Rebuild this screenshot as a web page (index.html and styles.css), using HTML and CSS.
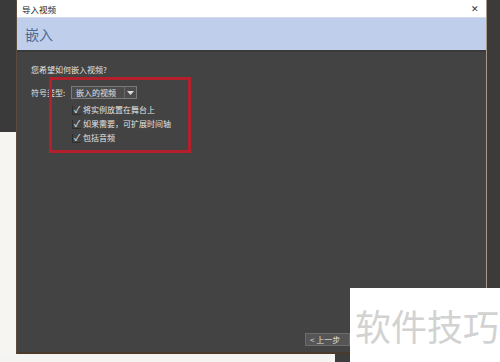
FILE: index.html
```html
<!DOCTYPE html>
<html>
<head>
  <title>导入视频</title>
  <link rel="stylesheet" href="styles.css">
</head>
<body>

<div class="screen">
  <div class="side-left">
    <div class="side-dark"></div>
    <div class="side-light"></div>
  </div>

  <div class="dialog">
    <div class="titlebar">
      <span class="title">导入视频</span>
      <span class="close">&#x2715;</span>
    </div>
    <div class="header">嵌入</div>

    <div class="content">
      <p class="question">您希望如何嵌入视频?</p>
      <div class="row">
        <span class="label">符号类型:</span>
        <div class="select">
          <span class="select-text">嵌入的视频</span>
          <span class="select-arrow">
            <svg width="7" height="4" viewBox="0 0 7 4"><path d="M0 0 L7 0 L3.5 4 Z" fill="#ddd"/></svg>
          </span>
        </div>
      </div>
      <div class="checks">
        <label class="check"><span class="box">&#x2713;</span>将实例放置在舞台上</label>
        <label class="check"><span class="box">&#x2713;</span>如果需要，可扩展时间轴</label>
        <label class="check"><span class="box">&#x2713;</span>包括音频</label>
      </div>
      <div class="mark"></div>
    </div>

    <div class="footer">
      <button class="btn">&lt; 上一步</button>
    </div>
  </div>

  <div class="side-right"></div>
</div>
<div class="bottom">
  <div class="bottom-light"></div>
  <div class="bottom-dark"></div>
</div>

<div class="watermark">软件技巧</div>

</body>
</html>
```

FILE: styles.css
```css
body {
  margin: 0;
  background: #f4f4f2;
  font-family: "Noto Sans CJK SC", "Noto Sans", sans-serif;
  overflow: hidden;
}
.screen {
  display: flex;
  height: 354px;
}
.side-left {
  width: 16px;
  display: flex;
  flex-direction: column;
}
.side-dark {
  height: 132px;
  background: #3a3a3a;
}
.side-light {
  flex: 1;
  background: #f6f5f2;
}
.side-right {
  flex: 1;
  background: #3d3b39;
}
.dialog {
  width: 469px;
  display: flex;
  flex-direction: column;
  background: #434343;
  border-left: 1px solid #5b4c3e;
  border-right: 1px solid #a89888;
  border-bottom: 2px solid #4a3a2c;
  position: relative;
}
.titlebar {
  height: 17px;
  background: #ffffff;
  display: flex;
  align-items: center;
  justify-content: space-between;
  padding: 0 7px 0 5px;
  border-bottom: 1px solid #d4dbe6;
}
.title {
  font-size: 8.5px;
  color: #222;
}
.close {
  font-size: 9px;
  color: #333;
}
.header {
  height: 32px;
  background: #bfcfeb;
  color: #4d6994;
  font-size: 14px;
  line-height: 32px;
  padding-left: 8px;
  border-bottom: 2px solid #3a3a3a;
}
.content {
  flex: 1;
  padding: 12px 14px 0 14px;
  color: #e2e2e2;
  font-size: 8px;
  position: relative;
}
.question {
  margin: 0 0 10px 0;
  line-height: 12px;
}
.row {
  display: flex;
  align-items: center;
  gap: 2px;
}
.label {
  width: 38px;
}
.select {
  display: flex;
  height: 11px;
  border: 1px solid #7a7a7a;
  background: #4c4c4c;
}
.select-text {
  width: 48px;
  padding-left: 4px;
  line-height: 11px;
}
.select-arrow {
  width: 11px;
  display: flex;
  align-items: center;
  justify-content: center;
  border-left: 1px solid #6a6a6a;
}
.checks {
  display: flex;
  flex-direction: column;
  gap: 2px;
  margin: 5px 0 0 41px;
}
.check {
  display: flex;
  align-items: center;
  line-height: 12px;
}
.box {
  width: 8px;
  height: 8px;
  margin-right: 2px;
  font-size: 9px;
  line-height: 8px;
  color: #eee;
  border-left: 1px solid #2e2e2e;
  border-bottom: 1px solid #2e2e2e;
  text-align: center;
}
.mark {
  position: absolute;
  left: 32px;
  top: 25px;
  width: 136px;
  height: 70px;
  border: 3px solid #b3202b;
}
.footer {
  display: flex;
  justify-content: flex-end;
  padding: 0 136px 6px 0;
}
.btn {
  width: 45px;
  height: 13px;
  padding: 0 0 0 4px;
  text-align: left;
  font-family: inherit;
  font-size: 8px;
  line-height: 11px;
  color: #e0e0e0;
  background: #555555;
  border: 1px solid #6c6c6c;
}
.bottom {
  display: flex;
  height: 8px;
}
.bottom-light {
  width: 335px;
  background: #f4f4f2;
}
.bottom-dark {
  flex: 1;
  background: #3d3d3d;
}
.watermark {
  position: absolute;
  left: 350px;
  top: 288px;
  width: 150px;
  height: 74px;
  background: #ffffff;
  color: #d2d2d2;
  font-size: 36px;
  line-height: 74px;
  padding-left: 5px;
  box-sizing: border-box;
  white-space: nowrap;
}
```
